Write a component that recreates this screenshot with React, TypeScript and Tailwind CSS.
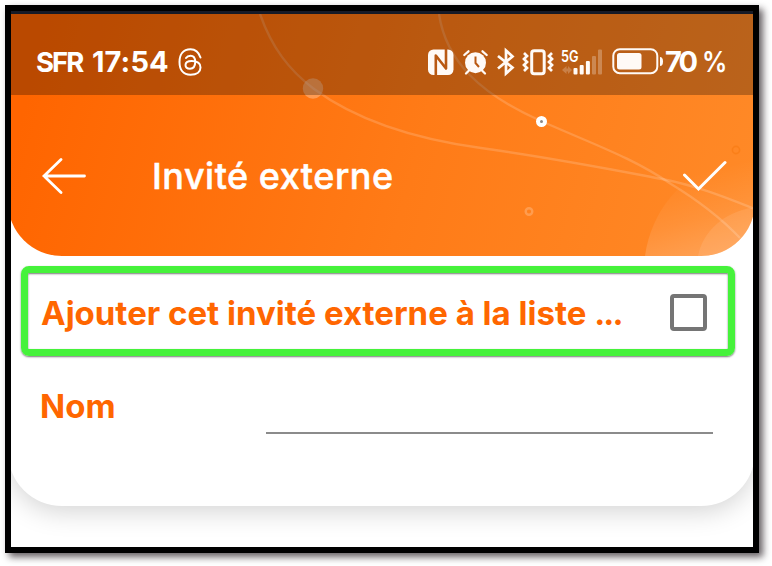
function HeaderArt() {
  return (
    <svg className="absolute inset-0 h-full w-full" viewBox="8 14 747 242" fill="none" preserveAspectRatio="none">
      <defs>
        <linearGradient id="disc" gradientUnits="userSpaceOnUse" x1="710" y1="170" x2="732" y2="256">
          <stop offset="0" stopColor="#fff" stopOpacity="0" />
          <stop offset="0.5" stopColor="#fff" stopOpacity="0.09" />
          <stop offset="1" stopColor="#fff" stopOpacity="0.22" />
        </linearGradient>
      </defs>
      <path d="M645 256C651 212 681 174 725 162C736 159 746 158 755 158V256Z" fill="url(#disc)" />
      <path d="M698 256C703 231 724 212 755 207V256Z" fill="#fff" fillOpacity="0.09" />
      <g stroke="#fff" strokeOpacity="0.17" strokeWidth="2.4">
        <path d="M260 14C272 48 289 70 314 89C367 128 437 142 481 148C559 159 604 168 662 179C698 186 727 198 755 209" />
        <path d="M439 14C446 61 480 94 541 121C595 145 631 157 671 184C699 201 719 216 740 238" />
      </g>
      <circle cx="313" cy="88.500" r="10.200" fill="#ffd9c0" fillOpacity="0.38" />
      <circle cx="541.500" cy="121.500" r="3.500" fill="#8c8783" stroke="#fff" strokeWidth="4" />
      <circle cx="529" cy="211.500" r="3.300" stroke="#fff" strokeOpacity="0.22" strokeWidth="2.400" />
      <circle cx="736" cy="150" r="3.600" stroke="#f4750b" strokeOpacity="0.45" strokeWidth="1.600" />
    </svg>
  );
}

function StatusIcons() {
  return (
    <svg className="h-[30px] w-[238px]" viewBox="425 47 238 30" fill="none">
      {/* NFC */}
      <rect x="427" y="49.500" width="25.500" height="25.500" rx="5.500" fill="#fffaf6" />
      <path d="M434.800 76V55.500L445 68.500V48.500" stroke="#b95913" strokeWidth="2.600" strokeLinejoin="round" />
      {/* alarm clock */}
      <g stroke="#fffaf6" strokeWidth="2.300" strokeLinecap="round">
        <path d="M463.300 55L467.500 51.300M481.500 51.300L485.700 55M465 73.500L468 70.500M481 70.500L484 73.500" />
      </g>
      <circle cx="474.500" cy="62.700" r="10.500" fill="#fffaf6" />
      <path d="M474.500 56.500V63L478 67" stroke="#b95913" strokeWidth="2" />
      {/* bluetooth */}
      <path d="M497 56L511.500 67.500L505 73.500V50.500L511.500 56.500L497 68.500" stroke="#fffaf6" strokeWidth="2.700" />
      {/* vibration */}
      <rect x="530.700" y="50.700" width="12.500" height="23" rx="2.500" stroke="#fffaf6" strokeWidth="3" />
      <g stroke="#fffaf6" strokeWidth="2.700">
        <path d="M523 53L526 56L523 59L526 62L523 65L526 68L523 71" />
        <path d="M551 53L548 56L551 59L548 62L551 65L548 68L551 71" />
      </g>
      {/* mobile signal */}
      <text x="560" y="61.500" fill="#fff" className="font-['Inter'] text-[16px] font-semibold" textLength="17.500" lengthAdjust="spacingAndGlyphs">5G</text>
      <path d="M565.500 66L561 70L565.500 74V71.500H567V74L571 70L567 66V68.500H565.500Z" fill="#fff" fillOpacity="0.22" />
      <g fill="#fffaf6">
        <rect x="572.500" y="68" width="4" height="6.500" rx="1" />
        <rect x="578.700" y="65" width="4" height="9.500" rx="1" />
        <rect x="584.900" y="61" width="4" height="13.500" rx="1" />
        <rect x="591" y="56" width="4" height="18.500" rx="1" fillOpacity="0.27" />
        <rect x="597" y="49.500" width="4" height="25" rx="1" fillOpacity="0.27" />
      </g>
      {/* battery */}
      <rect x="612.300" y="49.200" width="44" height="24" rx="6.500" stroke="#fffaf6" strokeWidth="2" />
      <rect x="616" y="53" width="24.500" height="16.500" rx="2.500" fill="#fffaf6" />
      <path d="M659 57Q662 57 662 61.500Q662 66 659 66Z" fill="#fffaf6" />
    </svg>
  );
}

function ThreadsIcon() {
  return (
    <svg className="ml-[9px] h-[30px] w-[26px]" viewBox="177 47 26 30" fill="none" stroke="#fff" strokeWidth="2" strokeLinecap="round">
      <path d="M200.500 57.500C198.500 51.500 195 49.300 190.500 49.300C183 49.300 179.500 54.500 179.500 62C179.500 69.500 183 74.700 190.500 74.700C197 74.700 200.500 71.500 200.500 67.500C200.500 62.500 196 61 191.800 61C187.800 61 185.500 62.500 185.500 65C185.500 67.300 187.500 68.700 190 68.700C193.500 68.700 195.200 66 195.200 62C195.200 57.500 193.500 55.800 190.500 55.800C188.200 55.800 187 56.500 186 58" />
    </svg>
  );
}

function StatusBar() {
  return (
    <div className="relative flex h-[81px] items-center bg-black/27 pl-[28px] pt-[14px] text-white">
      <span className="w-[49px] whitespace-nowrap text-[27.5px] font-bold leading-[30px] tracking-[-1.9px]">SFR</span>
      <span className="ml-[7px] w-[76px] whitespace-nowrap text-[29px] font-bold leading-[30px] tracking-[0.1px]">17:54</span>
      <ThreadsIcon />
      <div className="ml-auto flex items-center pr-[29px]">
        <StatusIcons />
        <span className="ml-px flex w-[61px] whitespace-nowrap text-[29px] font-bold leading-[30px] tracking-[-3px]">
          <span>70</span>
          <span className="ml-[7px] origin-left scale-x-[0.87] font-semibold">%</span>
        </span>
      </div>
    </div>
  );
}

export default function App() {
  return (
    <div className="h-[566px] w-[772px] overflow-hidden bg-white pl-[5px] pt-[5px] font-['Inter',sans-serif]">
      <div className="h-[548px] w-[754px] overflow-hidden border-[6px] border-black bg-white shadow-[4px_4px_7px_rgba(20,10,15,0.65)]">
        <div className="h-[3px] bg-[#181c29]" />
        <main className="-ml-[3px] h-[492px] w-[747px] rounded-b-[54px] bg-white shadow-[0_6px_26px_rgba(0,0,0,0.17)]">
          <header className="relative h-[242px] overflow-hidden rounded-b-[54px] bg-[linear-gradient(105deg,#ff6500_5%,#ff7b17_55%,#ff8a28_100%)]">
            <HeaderArt />
            <StatusBar />
            <div className="relative flex h-[161px] items-center pl-[34px] pr-[28px]">
              <svg className="h-[40px] w-[45px]" viewBox="42 156 45 40" fill="none" stroke="white" strokeWidth="2.800" strokeLinecap="round">
                <path d="M84.500 176H44M61 159.500L44 176L61 192.500" />
              </svg>
              <h1 className="ml-[65px] whitespace-nowrap text-[36px] font-medium leading-[44px] tracking-[0.5px] text-white [-webkit-text-stroke:0.5px_white]">Invité externe</h1>
              <svg className="ml-auto h-[34px] w-[45px]" viewBox="682 159 45 34" fill="none" stroke="white" strokeWidth="3" strokeLinecap="round">
                <path d="M684.500 175L698.500 189L725 162.500" />
              </svg>
            </div>
          </header>
          <div className="ml-[13px] mt-[10px] flex h-[90px] w-[714px] items-center rounded-[8px] border-[7px] border-[#46f23b] pl-[13px] pr-[21px] pt-[3px] shadow-[0_1px_2px_#777,inset_0_1px_2px_#777]">
            <span className="whitespace-nowrap text-[33px] font-bold leading-[44px] text-[#ff6600]">
              Ajouter cet invité externe à la liste <span className="tracking-[-1.8px]">...</span>
            </span>
            <span className="ml-auto h-[37px] w-[37px] shrink-0 rounded-[4px] border-[4px] border-[#757575]" />
          </div>
          <div className="flex h-[78px] items-end pl-[32px]">
            <label className="mb-[6px] w-[226px] text-[33px] font-bold leading-[44px] text-[#ff6600]">Nom</label>
            <div className="w-[447px] border-b-[2px] border-[#8b8b8b]" />
          </div>
        </main>
      </div>
    </div>
  );
}
